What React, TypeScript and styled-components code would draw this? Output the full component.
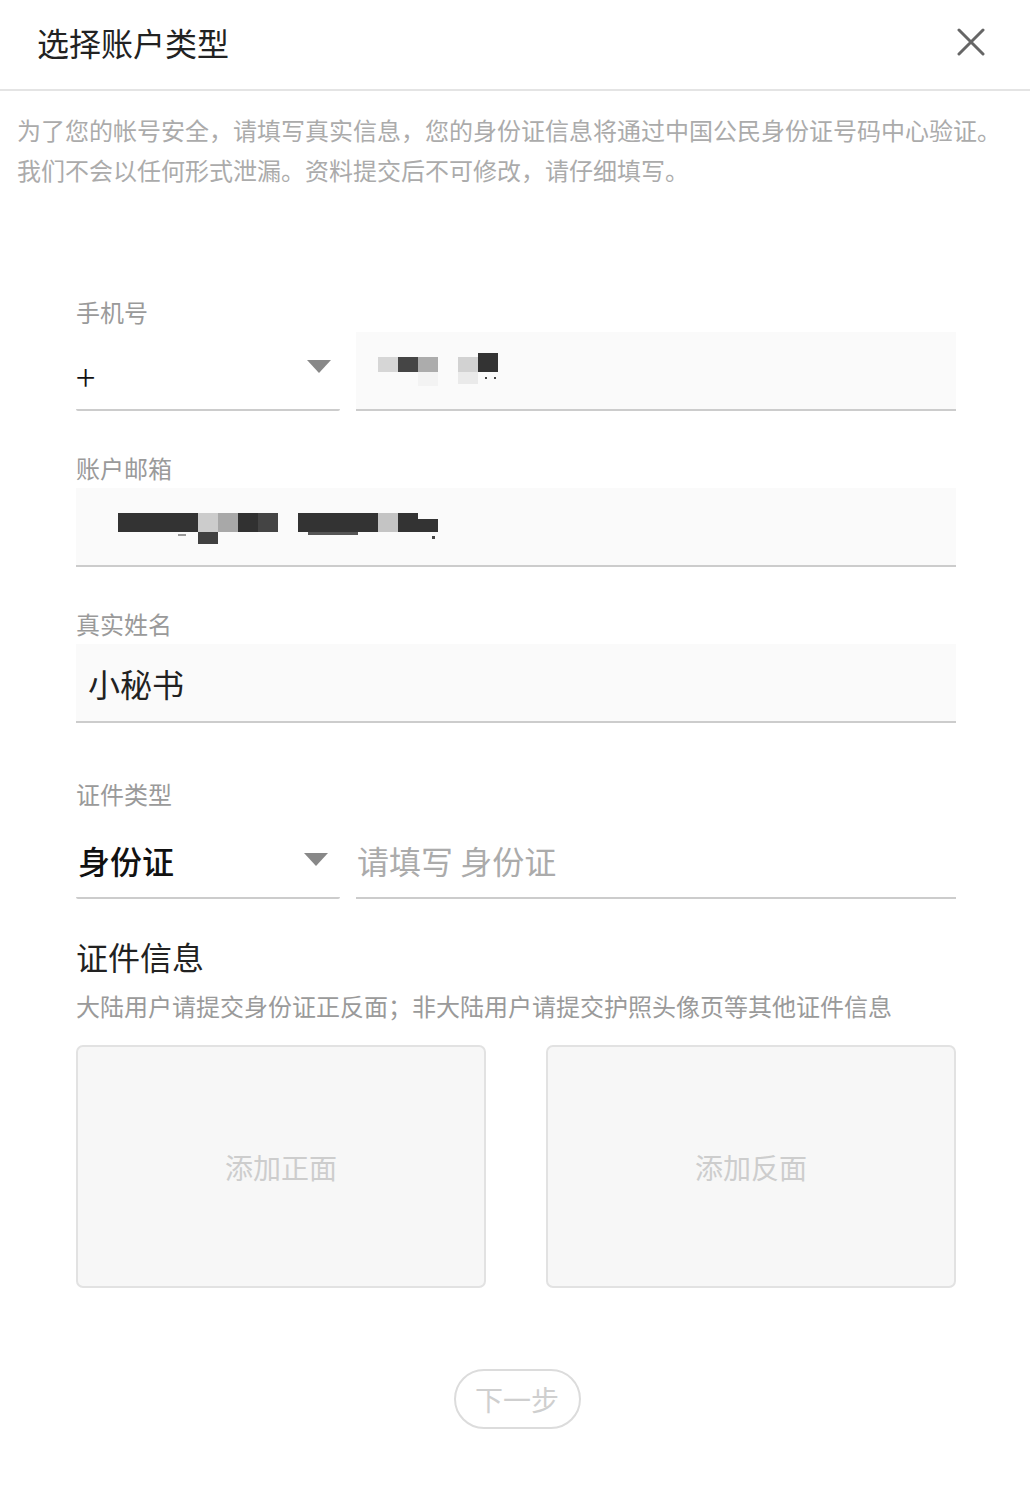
import React from "react";
import styled, { createGlobalStyle } from "styled-components";

const Global = createGlobalStyle`
  html, body { margin: 0; padding: 0; background: #ffffff; }
  body { font-family: "Noto Sans CJK SC", "Noto Sans", sans-serif; color: #222; }
  * { box-sizing: border-box; }
`;

const Page = styled.div`
  width: 1030px;
  min-height: 1486px;
  background: #fff;
`;

const Header = styled.header`
  height: 91px;
  display: flex;
  align-items: center;
  justify-content: space-between;
  padding: 0 44px 6px 37px;
  border-bottom: 2px solid #e4e4e4;
`;

const Title = styled.h1`
  margin: 0;
  font-size: 32px;
  font-weight: 400;
  line-height: 40px;
  color: #222;
`;

const CloseButton = styled.button`
  width: 30px;
  height: 30px;
  padding: 0;
  border: 0;
  background: none;
  display: flex;
  align-items: center;
  justify-content: center;
  cursor: pointer;
`;

const Notice = styled.p`
  margin: 0;
  padding: 19px 17px 0;
  font-size: 24px;
  line-height: 40px;
  color: #ababab;
`;

const Form = styled.form`
  margin-top: 106px;
  padding: 0 74px 0 76px;
  display: flex;
  flex-direction: column;
`;

const Field = styled.div<{ $gap?: number }>`
  margin-top: ${(p) => p.$gap ?? 0}px;
  display: flex;
  flex-direction: column;
`;

const Label = styled.label`
  font-size: 24px;
  line-height: 32px;
  color: #9a9a9a;
  margin-bottom: 4px;
`;

const Row = styled.div`
  display: grid;
  grid-template-columns: 264px 1fr;
  column-gap: 16px;
`;

const SelectBox = styled.div<{ $large?: boolean }>`
  height: ${(p) => (p.$large ? "85px" : "79px")};
  display: flex;
  align-items: center;
  justify-content: space-between;
  padding: ${(p) => (p.$large ? "8px 12px 0 2px" : "8px 9px 0 0")};
  border-bottom: 2px solid #cccccc;
  border-radius: 0 0 2px 2px;
  font-size: ${(p) => (p.$large ? "32px" : "36px")};
  font-weight: ${(p) => (p.$large ? 500 : 300)};
  color: #111;
`;

const Caret = styled.span<{ $small?: boolean }>`
  width: 0;
  height: 0;
  border-left: 12px solid transparent;
  border-right: 12px solid transparent;
  border-top: 13px solid #888;
  margin-top: ${(p) => (p.$small ? "-16px" : "0")};
`;

const InputBox = styled.div<{ $filled?: boolean; $pad?: number; $h?: number }>`
  height: ${(p) => p.$h ?? 79}px;
  display: flex;
  align-items: center;
  padding-left: ${(p) => p.$pad ?? 22}px;
  background: ${(p) => (p.$filled ? "#fafafa" : "transparent")};
  border-bottom: 2px solid #cccccc;
  font-size: 32px;
  color: #222;
`;

const Placeholder = styled.span`
  color: #ababab;
  font-size: 32px;
  padding-top: 8px;
`;

const Section = styled.section`
  margin-top: 35px;
  display: flex;
  flex-direction: column;
`;

const SectionTitle = styled.h2`
  margin: 0;
  font-size: 32px;
  font-weight: 400;
  line-height: 44px;
  color: #222;
`;

const SectionHint = styled.p`
  margin: 12px 0 0;
  font-size: 24px;
  line-height: 32px;
  color: #9a9a9a;
`;

const Uploads = styled.div`
  margin-top: 23px;
  display: grid;
  grid-template-columns: 1fr 1fr;
  column-gap: 60px;
`;

const UploadCard = styled.button`
  height: 243px;
  border: 2px solid #e2e2e2;
  border-radius: 7px;
  background: #f7f7f7;
  font-family: inherit;
  font-size: 28px;
  color: #cdcdcd;
  display: flex;
  align-items: center;
  justify-content: center;
  cursor: pointer;
`;

const Footer = styled.div`
  display: flex;
  justify-content: center;
  margin-top: 81px;
  padding-left: 2px;
`;

const NextButton = styled.button`
  width: 127px;
  height: 60px;
  border: 2px solid #dcdcdc;
  border-radius: 30px;
  background: #fff;
  font-family: inherit;
  font-size: 28px;
  color: #cfcfcf;
  cursor: default;
`;

const Mosaic: React.FC<{ w: number; h: number; cells: [number, number, number, number, string][] }> = ({ w, h, cells }) => (
  <svg width={w} height={h} viewBox={`0 0 ${w} ${h}`} aria-hidden="true">
    {cells.map(([x, y, cw, ch, c], i) => (
      <rect key={i} x={x} y={y} width={cw} height={ch} fill={c} />
    ))}
  </svg>
);

const CloseIcon = () => (
  <svg width="28" height="28" viewBox="0 0 28 28" aria-hidden="true">
    <path d="M2 2 L26 26 M26 2 L2 26" stroke="#666" strokeWidth="3" strokeLinecap="round" />
  </svg>
);

export default function App() {
  return (
    <Page>
      <Global />
      <Header>
        <Title>选择账户类型</Title>
        <CloseButton type="button" aria-label="关闭">
          <CloseIcon />
        </CloseButton>
      </Header>
      <Notice>
        为了您的帐号安全，请填写真实信息，您的身份证信息将通过中国公民身份证号码中心验证。
        <br />
        我们不会以任何形式泄漏。资料提交后不可修改，请仔细填写。
      </Notice>

      <Form onSubmit={(e) => e.preventDefault()}>
        <Field>
          <Label>手机号</Label>
          <Row>
            <SelectBox>
              <span>+</span>
              <Caret $small />
            </SelectBox>
            <InputBox $filled>
              <Mosaic
                w={130}
                h={40}
                cells={[
                  [0, 6, 20, 15, "#d6d6d6"],
                  [20, 6, 20, 15, "#454545"],
                  [40, 6, 20, 15, "#acacac"],
                  [40, 21, 20, 14, "#f3f3f3"],
                  [80, 6, 20, 15, "#d2d2d2"],
                  [80, 21, 20, 12, "#eaeaea"],
                  [100, 2, 20, 19, "#333333"],
                  [107, 26, 2, 2, "#444"],
                  [116, 26, 2, 2, "#444"],
                ]}
              />
            </InputBox>
          </Row>
        </Field>

        <Field $gap={41}>
          <Label>账户邮箱</Label>
          <InputBox $filled $pad={42}>
            <Mosaic
              w={340}
              h={40}
              cells={[
                [0, 6, 80, 19, "#333333"],
                [80, 6, 20, 19, "#cccccc"],
                [100, 6, 20, 19, "#a8a8a8"],
                [120, 6, 20, 19, "#313131"],
                [140, 6, 20, 19, "#444444"],
                [80, 25, 20, 12, "#404040"],
                [60, 27, 8, 2, "#999"],
                [180, 6, 80, 19, "#333333"],
                [260, 6, 20, 19, "#c4c4c4"],
                [280, 6, 20, 19, "#333333"],
                [300, 12, 20, 13, "#333333"],
                [190, 25, 50, 3, "#555"],
                [314, 29, 3, 3, "#444"],
              ]}
            />
          </InputBox>
        </Field>

        <Field $gap={41}>
          <Label>真实姓名</Label>
          <InputBox $filled $pad={12}>
            小秘书
          </InputBox>
        </Field>

        <Field $gap={55}>
          <Label>证件类型</Label>
          <Row>
            <SelectBox $large>
              <span>身份证</span>
              <Caret />
            </SelectBox>
            <InputBox $pad={1} $h={85}>
              <Placeholder>请填写 身份证</Placeholder>
            </InputBox>
          </Row>
        </Field>

        <Section>
          <SectionTitle>证件信息</SectionTitle>
          <SectionHint>大陆用户请提交身份证正反面；非大陆用户请提交护照头像页等其他证件信息</SectionHint>
          <Uploads>
            <UploadCard type="button">添加正面</UploadCard>
            <UploadCard type="button">添加反面</UploadCard>
          </Uploads>
        </Section>

        <Footer>
          <NextButton type="submit" disabled>
            下一步
          </NextButton>
        </Footer>
      </Form>
    </Page>
  );
}
